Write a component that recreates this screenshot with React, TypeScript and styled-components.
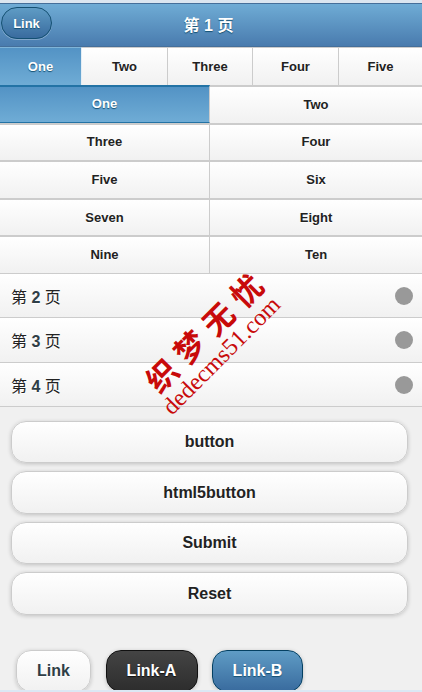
import React from "react";
import styled, { createGlobalStyle, css } from "styled-components";

const tabs = ["One", "Two", "Three", "Four", "Five"];
const gridItems = ["One", "Two", "Three", "Four", "Five", "Six", "Seven", "Eight", "Nine", "Ten"];
const pages = [2, 3, 4];
const formButtons = ["button", "html5button", "Submit", "Reset"];

const App = () => (
  <Page>
    <GlobalStyle />
    <TopStrip />
    <Header>
      <BackLink>Link</BackLink>
      <Title>第 1 页</Title>
    </Header>
    <TabBar>
      {tabs.map((tab, i) => (
        <Tab key={tab} $active={i === 0}>
          {tab}
        </Tab>
      ))}
    </TabBar>
    <Grid>
      {gridItems.map((item, i) => (
        <GridCell key={item} $active={i === 0}>
          {item}
        </GridCell>
      ))}
    </Grid>
    <PageList>
      {pages.map((page) => (
        <PageRow key={page}>
          <span>
            第 <PageNumber>{page}</PageNumber> 页
          </span>
          <Dot />
        </PageRow>
      ))}
    </PageList>
    <Form>
      {formButtons.map((label) => (
        <WideButton key={label}>{label}</WideButton>
      ))}
    </Form>
    <LinkRow>
      <InlineLink $variant="c">Link</InlineLink>
      <InlineLink $variant="a">Link-A</InlineLink>
      <InlineLink $variant="b">Link-B</InlineLink>
    </LinkRow>
    <BottomStrip />
    <Watermark>
      <WatermarkTitle>织梦无忧</WatermarkTitle>
      <WatermarkUrl>dedecms51.com</WatermarkUrl>
    </Watermark>
  </Page>
);

export default App;

const GlobalStyle = createGlobalStyle`
  html, body {
    margin: 0;
    padding: 0;
    background: #f0f0f0;
  }
  body {
    font-family: "Liberation Sans", "Noto Sans CJK SC", sans-serif;
  }
`;

const blueDown = "linear-gradient(#6facd5, #497bae)";
const blueUp = "linear-gradient(#5393c5, #6facd5)";
const blueButton = "linear-gradient(#5f9cc5, #396b9e)";
const whiteDown = "linear-gradient(#ffffff, #f1f1f1)";

const Page = styled.div`
  position: relative;
  width: 422px;
  height: 692px;
  overflow: hidden;
`;

const TopStrip = styled.div`
  height: 3px;
  background: #dbe6f0;
`;

const BottomStrip = styled.div`
  position: absolute;
  left: 0;
  right: 0;
  bottom: 0;
  height: 2px;
  background: #dbe8f4;
`;

const Header = styled.header`
  position: relative;
  height: 44px;
  box-sizing: border-box;
  padding: 0 5px 3px 0;
  display: flex;
  align-items: center;
  justify-content: center;
  background: ${blueDown};
  border-top: 1px solid #456f9a;
  border-bottom: 1px solid #456f9a;
`;

const BackLink = styled.a`
  position: absolute;
  left: 1px;
  top: 3px;
  width: 51px;
  height: 32px;
  box-sizing: border-box;
  display: flex;
  align-items: center;
  justify-content: center;
  border: 1px solid #145072;
  border-radius: 16px;
  background: ${blueButton};
  box-shadow: 0 1px 0 rgba(255, 255, 255, 0.3);
  color: #fff;
  font-size: 13px;
  font-weight: bold;
  text-shadow: 0 1px 1px #145072;
`;

const Title = styled.h1`
  margin: 0;
  color: #fff;
  font-size: 16px;
  font-weight: bold;
  text-shadow: 0 1px 1px #145072;
`;

const cellText = css`
  display: flex;
  align-items: center;
  justify-content: center;
  box-sizing: border-box;
  font-size: 13px;
  font-weight: bold;
`;

const TabBar = styled.nav`
  display: grid;
  grid-template-columns: 82px 86px 85px 86px 83px;
  height: 38px;
`;

const Tab = styled.div<{ $active: boolean }>`
  ${cellText}
  border-top: 1px solid #ccc;
  border-right: 1px solid #ccc;
  ${({ $active }) =>
    $active
      ? css`
          background: ${blueUp};
          color: #fff;
          text-shadow: 0 1px 1px #145072;
          border-top-color: #7fb4d8;
          border-right-color: #e4eef5;
        `
      : css`
          background: ${whiteDown};
          color: #222;
          text-shadow: 0 1px 0 #fff;
        `}
  &:last-child {
    border-right: none;
  }
`;

const Grid = styled.div`
  display: grid;
  grid-template-columns: 210px 212px;
  grid-auto-rows: 37.6px;
`;

const GridCell = styled.div<{ $active: boolean }>`
  ${cellText}
  padding-bottom: 1px;
  border-top: 2px solid #ccc;
  &:nth-child(odd) {
    border-right: 1px solid #ccc;
  }
  ${({ $active }) =>
    $active
      ? css`
          background: ${blueUp};
          color: #fff;
          text-shadow: 0 1px 1px #145072;
          border-top-color: #2373a5;
          border-bottom: 1px solid #2373a5;
        `
      : css`
          background: ${whiteDown};
          color: #222;
          text-shadow: 0 1px 0 #fff;
        `}
`;

const PageList = styled.div`
  display: flex;
  flex-direction: column;
  border-top: 1px solid #ccc;
`;

const PageRow = styled.div`
  height: 44.5px;
  box-sizing: border-box;
  padding: 0 9px 0 11px;
  display: flex;
  align-items: center;
  justify-content: space-between;
  background: ${whiteDown};
  border-bottom: 1px solid #ccc;
  color: #222;
  font-size: 16px;
  text-shadow: 0 1px 0 #fff;
`;

const PageNumber = styled.b`
  color: #2f3e46;
`;

const Dot = styled.span`
  width: 18px;
  height: 18px;
  border-radius: 50%;
  background: #999;
`;

const Form = styled.div`
  display: flex;
  flex-direction: column;
  gap: 8px;
  padding: 13.5px 14px 0 11px;
`;

const WideButton = styled.button`
  height: 42.5px;
  padding: 0;
  border: 1px solid #ccc;
  border-radius: 15px;
  background: ${whiteDown};
  box-shadow: 0 1px 4px rgba(0, 0, 0, 0.2);
  color: #222;
  font-family: inherit;
  font-size: 16px;
  font-weight: bold;
  text-shadow: 0 1px 0 #fff;
`;

const LinkRow = styled.div`
  display: flex;
  gap: 14.5px;
  padding: 35px 0 0 16px;
`;

const linkVariants = {
  a: css`
    width: 92px;
    background: linear-gradient(#444, #2d2d2d);
    border-color: #111;
    color: #fff;
    text-shadow: 0 1px 1px #111;
  `,
  b: css`
    width: 91px;
    background: ${blueButton};
    border-color: #044062;
    color: #fff;
    text-shadow: 0 1px 1px #145072;
  `,
  c: css`
    width: 75px;
    background: ${whiteDown};
    border-color: #ccc;
    color: #2f3e46;
    text-shadow: 0 1px 0 #fff;
  `,
};

const InlineLink = styled.a<{ $variant: "a" | "b" | "c" }>`
  height: 42px;
  box-sizing: border-box;
  display: flex;
  align-items: center;
  justify-content: center;
  border: 1px solid;
  border-radius: 15px;
  box-shadow: 0 1px 4px rgba(0, 0, 0, 0.2);
  font-size: 16px;
  font-weight: bold;
  ${({ $variant }) => linkVariants[$variant]}
`;

const Watermark = styled.div`
  position: absolute;
  left: 155px;
  top: 370px;
  width: 190px;
  transform: rotate(-45deg);
  transform-origin: 0 50%;
  pointer-events: none;
  color: #c80a0a;
  white-space: nowrap;
`;

const WatermarkTitle = styled.div`
  font-family: "Noto Sans CJK SC", sans-serif;
  font-size: 31px;
  font-weight: 700;
  line-height: 32px;
  letter-spacing: 9px;
  margin-left: 6px;
`;

const WatermarkUrl = styled.div`
  font-family: "Liberation Serif", serif;
  font-size: 24px;
  line-height: 26px;
  margin-left: 0;
`;
